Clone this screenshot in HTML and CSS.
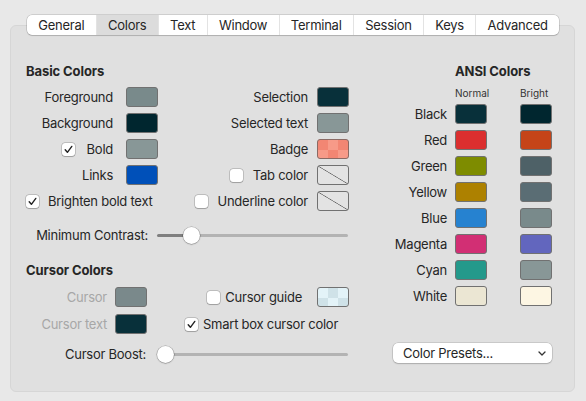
FILE: index.html
```html
<!DOCTYPE html>
<html>
<head>
<meta charset="utf-8">
<link rel="stylesheet" href="styles.css">
</head>
<body>
<div class="window">
  <div class="tabs">
    <div class="tabbar">
      <div class="tab">General</div>
      <div class="tab active">Colors</div>
      <div class="tab">Text</div>
      <div class="tab">Window</div>
      <div class="tab">Terminal</div>
      <div class="tab">Session</div>
      <div class="tab">Keys</div>
      <div class="tab">Advanced</div>
    </div>
  </div>
  <div class="panel">
    <div class="left">
      <h3 class="hdr">Basic Colors</h3>
      <div class="basic">
        <div class="lbl a">Foreground</div><div class="sw c-fg"></div>
        <div class="lbl b">Selection</div><div class="sw c-sel"></div>

        <div class="lbl a">Background</div><div class="sw c-bg"></div>
        <div class="lbl b">Selected text</div><div class="sw c-seltext"></div>

        <div class="lbl a"><span class="cb on"><svg viewBox="0 0 13 13"><path d="M3.2 6.8 L5.4 9.3 L9.8 3.4"/></svg></span><span class="bold-l">Bold</span></div><div class="sw c-bold"></div>
        <div class="lbl b">Badge</div><div class="sw c-badge"></div>

        <div class="lbl a">Links</div><div class="sw c-link"></div>
        <div class="lbl b"><span class="cb"></span><span class="tab-l">Tab color</span></div><div class="sw none"></div>

        <div class="lbl brighten"><span class="cb on"><svg viewBox="0 0 13 13"><path d="M3.2 6.8 L5.4 9.3 L9.8 3.4"/></svg></span><span class="g9">Brighten bold text</span></div>
        <div class="lbl b"><span class="cb"></span><span class="g9">Underline color</span></div><div class="sw none"></div>
      </div>

      <div class="slider-row contrast">
        <div class="slabel">Minimum Contrast:</div>
        <div class="slider">
          <div class="track fill35"></div>
          <div class="knob" style="left:26px"></div>
        </div>
      </div>

      <h3 class="hdr cursor-h">Cursor Colors</h3>
      <div class="cursor">
        <div class="lbl c dis">Cursor</div><div class="sw c-cur"></div>
        <div class="lbl guide"><span class="cb"></span><span class="g5">Cursor guide</span></div><div class="sw c-guide"></div>

        <div class="lbl c dis">Cursor text</div><div class="sw c-curtext"></div>
        <div class="lbl smart"><span class="cb on"><svg viewBox="0 0 13 13"><path d="M3.2 6.8 L5.4 9.3 L9.8 3.4"/></svg></span><span class="g5">Smart box cursor color</span></div>
      </div>

      <div class="slider-row boost">
        <div class="slabel">Cursor Boost:</div>
        <div class="slider">
          <div class="track"></div>
          <div class="knob" style="left:0px"></div>
        </div>
      </div>
    </div>

    <div class="right">
      <h3 class="hdr ansi-h">ANSI Colors</h3>
      <div class="ansi-sub">
        <span class="n">Normal</span><span class="b">Bright</span>
      </div>
      <div class="ansi">
        <div class="albl">Black</div><div class="sw a-k"></div><div></div><div class="sw a-bk"></div>
        <div class="albl">Red</div><div class="sw a-r"></div><div></div><div class="sw a-br"></div>
        <div class="albl">Green</div><div class="sw a-g"></div><div></div><div class="sw a-bg"></div>
        <div class="albl">Yellow</div><div class="sw a-y"></div><div></div><div class="sw a-by"></div>
        <div class="albl">Blue</div><div class="sw a-b"></div><div></div><div class="sw a-bb"></div>
        <div class="albl">Magenta</div><div class="sw a-m"></div><div></div><div class="sw a-bm"></div>
        <div class="albl">Cyan</div><div class="sw a-c"></div><div></div><div class="sw a-bc"></div>
        <div class="albl">White</div><div class="sw a-w"></div><div></div><div class="sw a-bw"></div>
      </div>
      <div class="preset">
        <span>Color Presets...</span>
        <svg class="chev" viewBox="0 0 8 5" width="8" height="5"><path d="M1 1 L4 4 L7 1"/></svg>
      </div>
    </div>
  </div>
</div>
</body>
</html>
```
FILE: styles.css
```css
* { box-sizing: border-box; margin: 0; padding: 0; }
html, body { width: 586px; height: 401px; overflow: hidden; }
body {
  background: #e8e8e8;
  font-family: Inter, "Liberation Sans", sans-serif;
  font-size: 13px;
  letter-spacing: -0.25px;
  color: #262626;
}
.window { padding-top: 15px; }

/* tabs */
.tabs { position: relative; z-index: 1; display: flex; justify-content: center; }
.tabbar {
  display: flex;
  height: 20px;
  background: #fff;
  border-radius: 5px;
  box-shadow: 0 0 0 0.5px rgba(0,0,0,0.22), 0 1px 1px rgba(0,0,0,0.12);
  overflow: hidden;
}
.tab { padding: 0 11.3px; line-height: 20px; border-left: 1px solid #e3e3e3; white-space: nowrap; }
.tab:first-child { border-left: 0; }
.tab.active { background: #dcdcdc; }

/* panel */
.panel {
  margin: -10px 11px 0 10px;
  height: 367px;
  background: #e0e0e0;
  border: 1px solid #d6d6d6;
  border-radius: 6px;
  padding: 37px 22px 0 15px;
  display: flex;
  gap: 44px;
}
.left { width: 323px; display: flex; flex-direction: column; }
.hdr { font-weight: 700; font-size: 13px; line-height: 16px; height: 16px; letter-spacing: -0.1px; }

.basic {
  margin-top: 8px;
  display: grid;
  grid-template-columns: 100px 32px 1fr 32px;
  grid-auto-rows: 20px;
  row-gap: 6px;
}
.lbl { display: flex; align-items: center; justify-content: flex-end; white-space: nowrap; }
.lbl.a { padding-right: 13px; }
.lbl.b { padding-right: 9px; }
.lbl.brighten { grid-column: 1 / 3; justify-content: flex-start; }
.bold-l { margin-left: 12px; }
.tab-l { margin-left: 10px; }
.g9 { margin-left: 9px; }
.g5 { margin-left: 5px; }

.cb {
  width: 13px; height: 13px;
  background: #fff;
  border-radius: 3px;
  box-shadow: 0 0 0 0.5px rgba(0,0,0,0.28), 0 0.5px 1px rgba(0,0,0,0.18);
  display: inline-flex;
  flex: none;
}
.cb svg { width: 13px; height: 13px; }
.cb path { fill: none; stroke: #222; stroke-width: 1.4; stroke-linecap: round; stroke-linejoin: round; }

.sw { width: 32px; height: 20px; border: 1px solid #717171; border-radius: 3px; }
.c-fg { background: #798a8b; }
.c-sel { background: #08303a; }
.c-bg { background: #00262f; }
.c-seltext { background: #889797; }
.c-bold { background: #889797; }
.c-badge {
  background-color: #f28673;
  background-image: conic-gradient(#f79a88 25%, transparent 0 50%, #f79a88 0 75%, transparent 0);
  background-size: 20px 20px;
  border-color: #8a6a64;
}
.c-link { background: #0050b9; }
.none {
  background: linear-gradient(to top right, transparent calc(50% - 0.7px), #6a6a6a 50%, transparent calc(50% + 0.7px)) #e3e3e3;
}
.c-cur { background: #7a898b; }
.c-curtext { background: #08303a; }
.c-guide {
  background-color: #e3f3f8;
  background-image: conic-gradient(#cfe2e8 25%, transparent 0 50%, #cfe2e8 0 75%, transparent 0);
  background-size: 20px 20px;
}

/* sliders */
.slider-row { display: flex; align-items: center; height: 20px; }
.contrast { margin-top: 14px; }
.boost { margin-top: 10px; }
.slabel { width: 122px; text-align: right; white-space: nowrap; }
.boost .slabel { width: 120px; }
.slider { position: relative; margin-left: 9px; width: 191px; height: 20px; display: flex; align-items: center; }
.boost .slider { margin-left: 11px; width: 191px; }
.track { width: 100%; height: 3px; border-radius: 2px; background: #b3b3b3; }
.track.fill35 { background: linear-gradient(to right, #7f7f7f 35px, #b3b3b3 35px); }
.knob {
  position: absolute;
  top: 1.5px;
  width: 17px; height: 17px;
  border-radius: 50%;
  background: #fff;
  box-shadow: 0 0 0 0.5px rgba(0,0,0,0.25), 0 0.5px 1.5px rgba(0,0,0,0.3);
}

.cursor-h { margin-top: 17px; }
.cursor {
  margin-top: 9px;
  display: grid;
  grid-template-columns: 89px 32px 1fr 32px;
  grid-auto-rows: 20px;
  row-gap: 7px;
}
.lbl.c { padding-right: 8px; }
.dis { color: #a7a7a7; }
.lbl.guide { padding-right: 15px; }
.lbl.smart { grid-column: 3 / 5; justify-content: flex-start; padding-left: 38px; }

/* right */
.right { width: 159px; display: flex; flex-direction: column; }
.ansi-h { padding-left: 62px; }
.ansi-sub {
  margin-top: 8px;
  display: grid;
  grid-template-columns: 62px 32px 33px 32px;
  font-size: 10px;
  line-height: 12px;
  letter-spacing: 0;
  color: #333;
}
.ansi-sub .n { grid-column: 2; white-space: nowrap; }
.ansi-sub .b { grid-column: 4; white-space: nowrap; }
.ansi {
  margin-top: 5px;
  display: grid;
  grid-template-columns: 62px 32px 33px 32px;
  grid-auto-rows: 20px;
  row-gap: 6px;
}
.albl { display: flex; align-items: center; justify-content: flex-end; padding-right: 8px; }
.a-k { background: #08303a; }
.a-bk { background: #00262f; }
.a-r { background: #db2f2f; }
.a-br { background: #c54418; }
.a-g { background: #7e8c00; }
.a-bg { background: #4e6167; }
.a-y { background: #ad8100; }
.a-by { background: #5a6d74; }
.a-b { background: #2682d0; }
.a-bb { background: #798a8b; }
.a-m { background: #d22f74; }
.a-bm { background: #6266be; }
.a-c { background: #24998b; }
.a-bc { background: #889797; }
.a-w { background: #ebe6d3; }
.a-bw { background: #fdf6e3; }

.preset {
  margin-top: 37px;
  height: 20px;
  display: flex;
  align-items: center;
  justify-content: space-between;
  background: #fff;
  border-radius: 5px;
  box-shadow: 0 0 0 0.5px rgba(0,0,0,0.2), 0 1px 1.5px rgba(0,0,0,0.15);
  padding: 0 6px 0 10px;
}
.chev path { fill: none; stroke: #333; stroke-width: 1.3; stroke-linecap: round; stroke-linejoin: round; }
```
